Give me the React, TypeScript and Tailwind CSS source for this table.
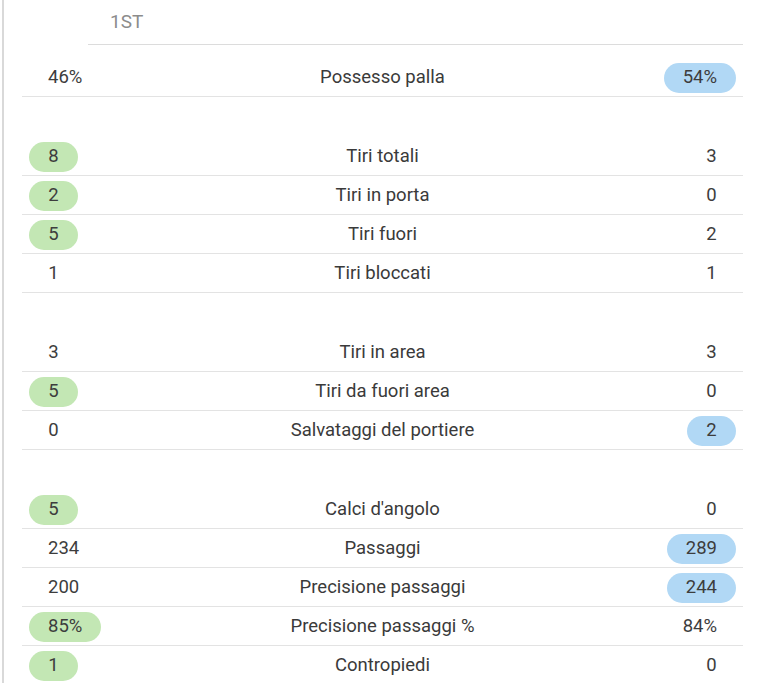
import React from "react";

type Hi = "l" | "r" | null;
type Row = { l: string; label: string; r: string; hi: Hi } | null;

const rows: Row[] = [
  { l: "46%", label: "Possesso palla", r: "54%", hi: "r" },
  null,
  { l: "8", label: "Tiri totali", r: "3", hi: "l" },
  { l: "2", label: "Tiri in porta", r: "0", hi: "l" },
  { l: "5", label: "Tiri fuori", r: "2", hi: "l" },
  { l: "1", label: "Tiri bloccati", r: "1", hi: null },
  null,
  { l: "3", label: "Tiri in area", r: "3", hi: null },
  { l: "5", label: "Tiri da fuori area", r: "0", hi: "l" },
  { l: "0", label: "Salvataggi del portiere", r: "2", hi: "r" },
  null,
  { l: "5", label: "Calci d'angolo", r: "0", hi: "l" },
  { l: "234", label: "Passaggi", r: "289", hi: "r" },
  { l: "200", label: "Precisione passaggi", r: "244", hi: "r" },
  { l: "85%", label: "Precisione passaggi %", r: "84%", hi: "l" },
  { l: "1", label: "Contropiedi", r: "0", hi: "l" },
];

function Val({ v, bg }: { v: string; bg: string }) {
  return (
    <span
      className={
        "inline-flex items-center justify-center h-[30px] min-w-[49px] px-[19px] rounded-full text-[18.5px] leading-none text-[#3d3d3d] " +
        bg
      }
    >
      {v}
    </span>
  );
}

export default function App() {
  return (
    <div className="w-[767px] h-[683px] bg-white overflow-hidden font-['Roboto','Liberation_Sans',sans-serif]">
      <div className="ml-[2px] h-full border-l-2 border-[#d9d9d9] pl-[18px] pr-[24px]">
        <div className="ml-[66px] h-[45px] border-b border-[#dcdcdc] flex items-center pl-[22px] text-[19px] text-[#8c8c8c]">
          1ST
        </div>
        <div className="mt-[13px]">
          {rows.map((r, i) =>
            r === null ? (
              <div key={i} className="h-[40px]" />
            ) : (
              <div
                key={i}
                className="h-[39px] flex items-center border-b border-[#e3e3e3] pt-[1px]"
              >
                <div className="w-[160px] pl-[7px] flex">
                  <Val v={r.l} bg={r.hi === "l" ? "bg-[#c3e7b4]" : ""} />
                </div>
                <div className="flex-1 text-center text-[18.5px] leading-none text-[#3a3a3a]">
                  {r.label}
                </div>
                <div className="w-[160px] pr-[7px] flex justify-end">
                  <Val v={r.r} bg={r.hi === "r" ? "bg-[#b1d8f5]" : ""} />
                </div>
              </div>
            )
          )}
        </div>
      </div>
    </div>
  );
}
